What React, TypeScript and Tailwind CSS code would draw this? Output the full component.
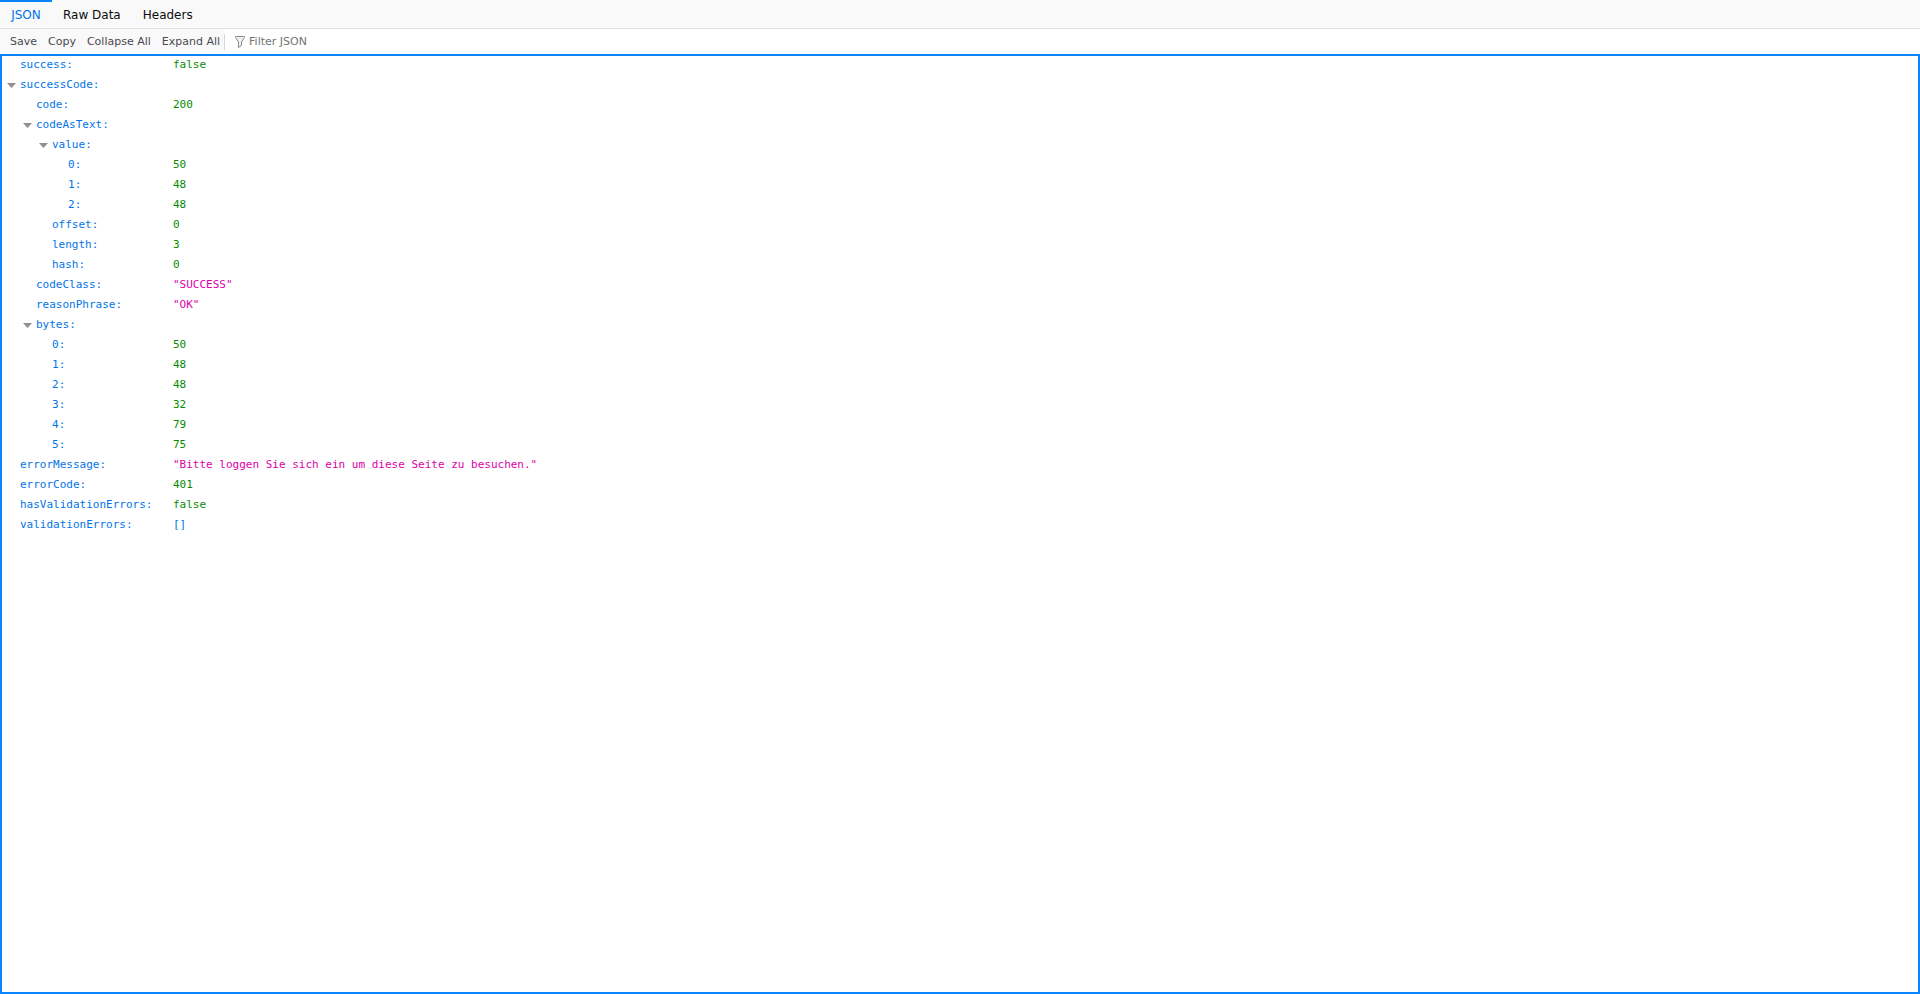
import React from 'react';

interface Row {
  label: string;
  level: number;
  value?: string;
  kind?: 'num' | 'str' | 'arr';
  open?: boolean;
}

const rows: Row[] = [
  { label: 'success', level: 0, value: 'false', kind: 'num' },
  { label: 'successCode', level: 0, open: true },
  { label: 'code', level: 1, value: '200', kind: 'num' },
  { label: 'codeAsText', level: 1, open: true },
  { label: 'value', level: 2, open: true },
  { label: '0', level: 3, value: '50', kind: 'num' },
  { label: '1', level: 3, value: '48', kind: 'num' },
  { label: '2', level: 3, value: '48', kind: 'num' },
  { label: 'offset', level: 2, value: '0', kind: 'num' },
  { label: 'length', level: 2, value: '3', kind: 'num' },
  { label: 'hash', level: 2, value: '0', kind: 'num' },
  { label: 'codeClass', level: 1, value: '"SUCCESS"', kind: 'str' },
  { label: 'reasonPhrase', level: 1, value: '"OK"', kind: 'str' },
  { label: 'bytes', level: 1, open: true },
  { label: '0', level: 2, value: '50', kind: 'num' },
  { label: '1', level: 2, value: '48', kind: 'num' },
  { label: '2', level: 2, value: '48', kind: 'num' },
  { label: '3', level: 2, value: '32', kind: 'num' },
  { label: '4', level: 2, value: '79', kind: 'num' },
  { label: '5', level: 2, value: '75', kind: 'num' },
  { label: 'errorMessage', level: 0, value: '"Bitte loggen Sie sich ein um diese Seite zu besuchen."', kind: 'str' },
  { label: 'errorCode', level: 0, value: '401', kind: 'num' },
  { label: 'hasValidationErrors', level: 0, value: 'false', kind: 'num' },
  { label: 'validationErrors', level: 0, value: '[]', kind: 'arr' },
];

const Twisty = () => (
  <svg width="9" height="5" viewBox="0 0 9 5" className="block">
    <path d="M0 0h9L4.5 5z" fill="#8f8f8f" />
  </svg>
);

const TreeRow = ({ row }: { row: Row }) => {
  const valueColor =
    row.kind === 'str' ? 'text-[#dd00a9]' : row.kind === 'arr' ? 'text-[#0074e8]' : 'text-[#058b00]';
  return (
    <div className="flex h-5 items-center pb-[2px]">
      <div className="flex w-[171px] shrink-0 items-center" style={{ paddingLeft: row.level * 16 }}>
        <span className="flex w-[18px] shrink-0 pl-[5px]">{row.open && <Twisty />}</span>
        <span className="text-[#0074e8]">{row.label}:</span>
      </div>
      <span className={valueColor}>{row.value}</span>
    </div>
  );
};

export default function App() {
  return (
    <div className="flex h-[994px] w-[1920px] flex-col overflow-hidden bg-white font-['DejaVu_Sans',sans-serif] text-[12px] text-[#0c0c0d]">
      {/* Tabs */}
      <div className="flex h-[29px] shrink-0 border-b border-[#e0e0e1] bg-[#f9f9fa] pt-[2px]">
        <div className="relative flex w-[52px] items-center justify-center text-[#0074e8]">
          <div className="absolute inset-x-0 -top-[2px] h-[2px] bg-[#0a84ff]" />
          JSON
        </div>
        <div className="flex items-center gap-[22px] pl-[11px]">
          <span>Raw Data</span>
          <span>Headers</span>
        </div>
      </div>

      {/* Toolbar */}
      <div className="flex h-[25px] shrink-0 items-start text-[11px]">
        <div className="flex h-[21px] items-center gap-[11px] bg-[#f9f9fa] pl-[10px] pr-[4px] pt-[5px] text-[#4a4a4f]">
          <span>Save</span>
          <span>Copy</span>
          <span>Collapse All</span>
          <span>Expand All</span>
        </div>
        <div className="mt-[5px] h-[16px] w-px bg-[#d7d7db]" />
        <div className="flex h-[25px] items-center gap-[4px] pl-[10px] pt-[1px] text-[#737373]">
          <svg width="10" height="12" viewBox="0 0 10 12" fill="#f1f1f1" stroke="#8a8a8a" strokeWidth="1">
            <path d="M.5.5h9v1L6.5 6v3.5l-3 2V6L.5 1.5z" />
          </svg>
          <span>Filter JSON</span>
        </div>
      </div>

      {/* Tree */}
      <div className="min-h-0 flex-1 border-2 border-[#0a84ff] font-['DejaVu_Sans_Mono',monospace] text-[11px]">
        {rows.map((row, i) => (
          <TreeRow key={i} row={row} />
        ))}
      </div>
    </div>
  );
}
